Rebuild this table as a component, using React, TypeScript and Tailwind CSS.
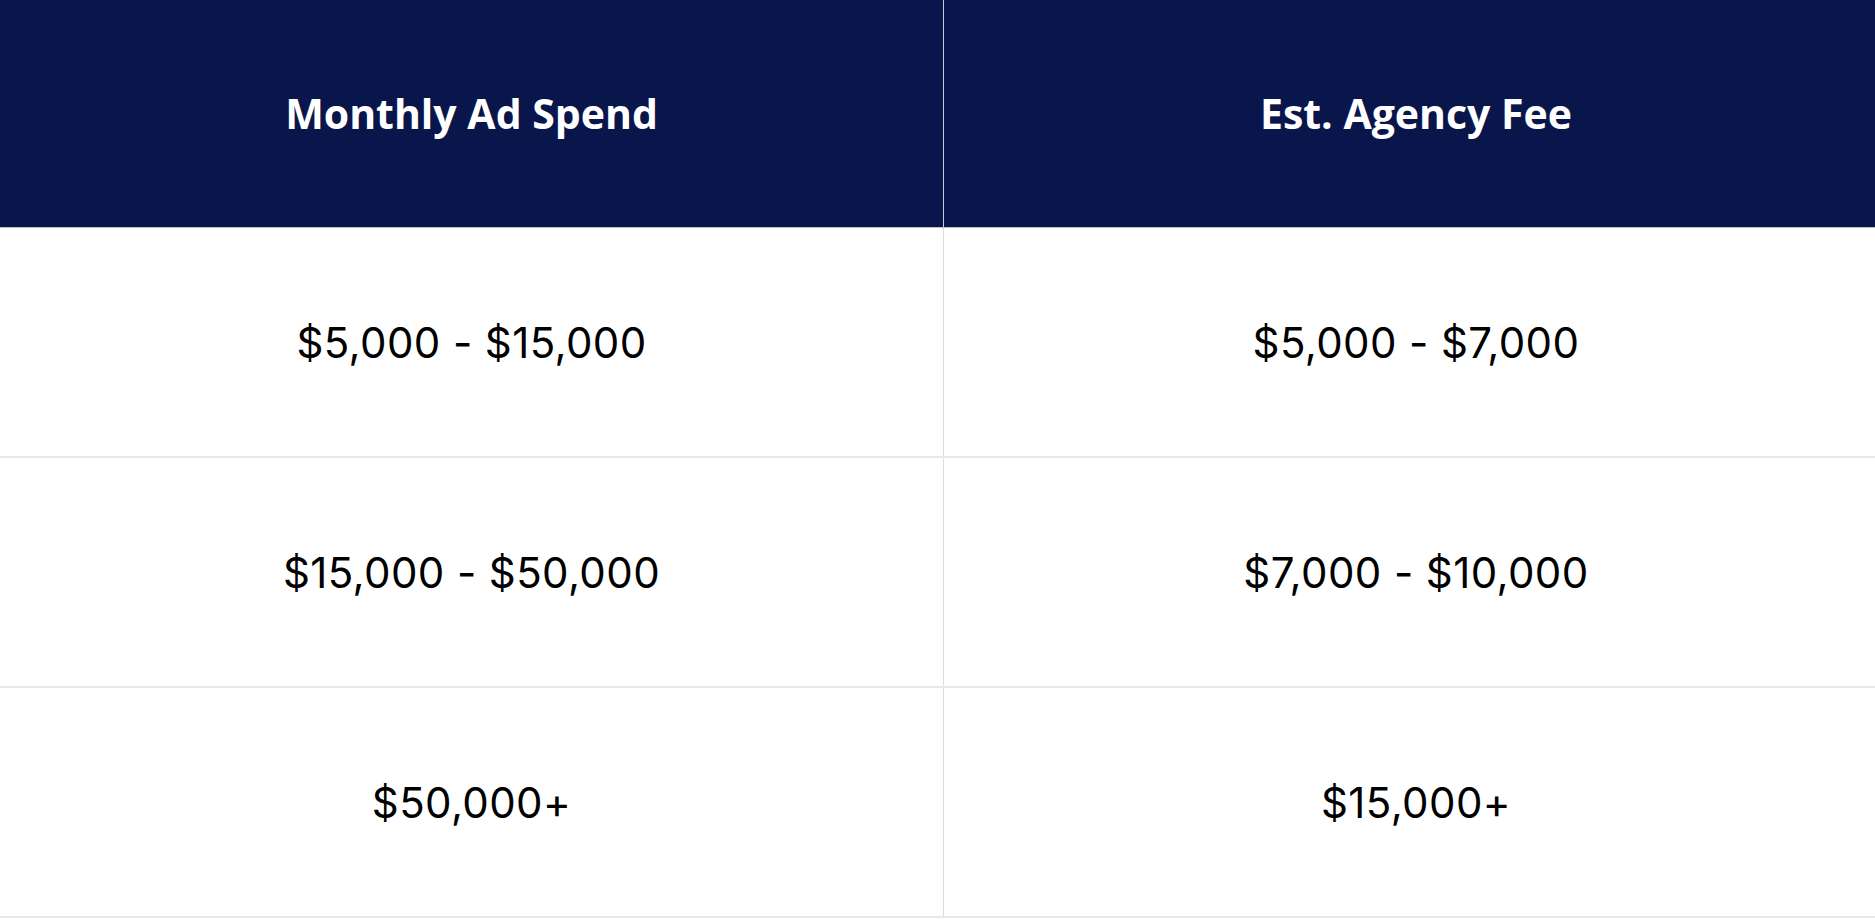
const rows = [
  ["$5,000 - $15,000", "$5,000 - $7,000"],
  ["$15,000 - $50,000", "$7,000 - $10,000"],
  ["$50,000+", "$15,000+"],
];

export default function App() {
  return (
    <div className="w-[1875px] h-[920px] bg-white overflow-hidden">
      <div className="w-[1888px]">
        <div className="grid grid-cols-[944px_944px] h-[228px] bg-[#09164c] border-b border-[#b8bccb]">
          <div className="flex items-center justify-center border-r border-[#c9ccd6] font-['Open_Sans',sans-serif] font-bold text-[41px] text-white">
            Monthly Ad Spend
          </div>
          <div className="flex items-center justify-center font-['Open_Sans',sans-serif] font-bold text-[41px] text-white">
            Est. Agency Fee
          </div>
        </div>
        {rows.map((r, i) => (
          <div key={i} className="grid grid-cols-[944px_944px] h-[230px] border-b-2 border-[#e8e8e8]">
            <div className="flex items-center justify-center border-r border-[#dcdcdc] font-['Inter',sans-serif] text-[42px] tracking-[0.4px] text-black">
              {r[0]}
            </div>
            <div className="flex items-center justify-center font-['Inter',sans-serif] text-[42px] tracking-[0.4px] text-black">
              {r[1]}
            </div>
          </div>
        ))}
      </div>
    </div>
  );
}
